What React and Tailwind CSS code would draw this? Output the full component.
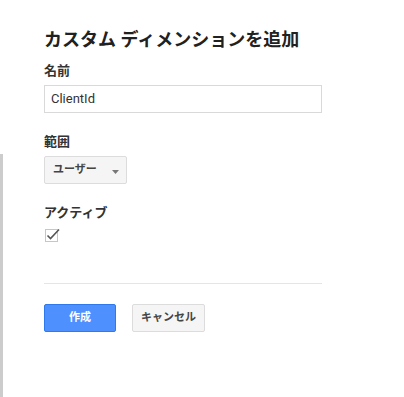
export default function App() {
  return (
    <div
      className="flex w-[404px] h-[397px] bg-white text-[#222] overflow-hidden"
      style={{ fontFamily: "Roboto, 'Noto Sans CJK JP', sans-serif" }}
    >
      <div className="w-[3px] mt-[154px] bg-[#cccccc] shrink-0" />
      <div className="flex flex-col pl-[41px] pt-[28px] w-[322px]">
        <h1 className="text-[18px] leading-[24px] font-bold text-[#212121] whitespace-nowrap">
          カスタム ディメンションを追加
        </h1>
        <div className="mt-[11px] text-[13px] leading-[16px] font-bold text-[#333]">名前</div>
        <div className="mt-[6px] h-[28px] w-[278px] border border-[#d9d9d9] flex items-center pl-[6px] text-[13px] text-[#333]">
          ClientId
        </div>
        <div className="mt-[21px] text-[13px] leading-[16px] font-bold text-[#333]">範囲</div>
        <div className="mt-[6px] h-[28px] w-[83px] border border-[#dcdcdc] rounded-[2px] bg-[#f5f5f5] flex items-center pl-[8px] text-[11px] font-bold text-[#444]">
          <span>ユーザー</span>
          <svg width="7" height="4" viewBox="0 0 7 4" className="ml-[15px] mt-[3px]">
            <polygon points="0,0 7,0 3.5,4" fill="#777" />
          </svg>
        </div>
        <div className="mt-[21px] text-[13px] leading-[16px] font-bold text-[#333]">アクティブ</div>
        <div className="mt-[8px] ml-[1px] relative w-[13px] h-[13px] border border-[#c6c6c6] bg-white">
          <svg width="16" height="16" viewBox="0 0 16 16" className="absolute left-[-1px] top-[-4px]">
            <path d="M2.5 9.5 L5.5 12.5 L14 3.5" stroke="#555" strokeWidth="1.6" fill="none" />
          </svg>
        </div>
        <div className="mt-[41px] h-px w-[278px] bg-[#e5e5e5]" />
        <div className="mt-[20px] flex gap-[16px]">
          <div className="h-[28px] w-[72px] rounded-[2px] bg-[#4d90fe] border border-[#3079ed] flex items-center justify-center text-[11px] font-bold text-white">
            作成
          </div>
          <div className="h-[28px] w-[73px] rounded-[2px] bg-[#f5f5f5] border border-[#dcdcdc] flex items-center justify-center text-[11px] font-bold text-[#444]">
            キャンセル
          </div>
        </div>
      </div>
    </div>
  );
}
